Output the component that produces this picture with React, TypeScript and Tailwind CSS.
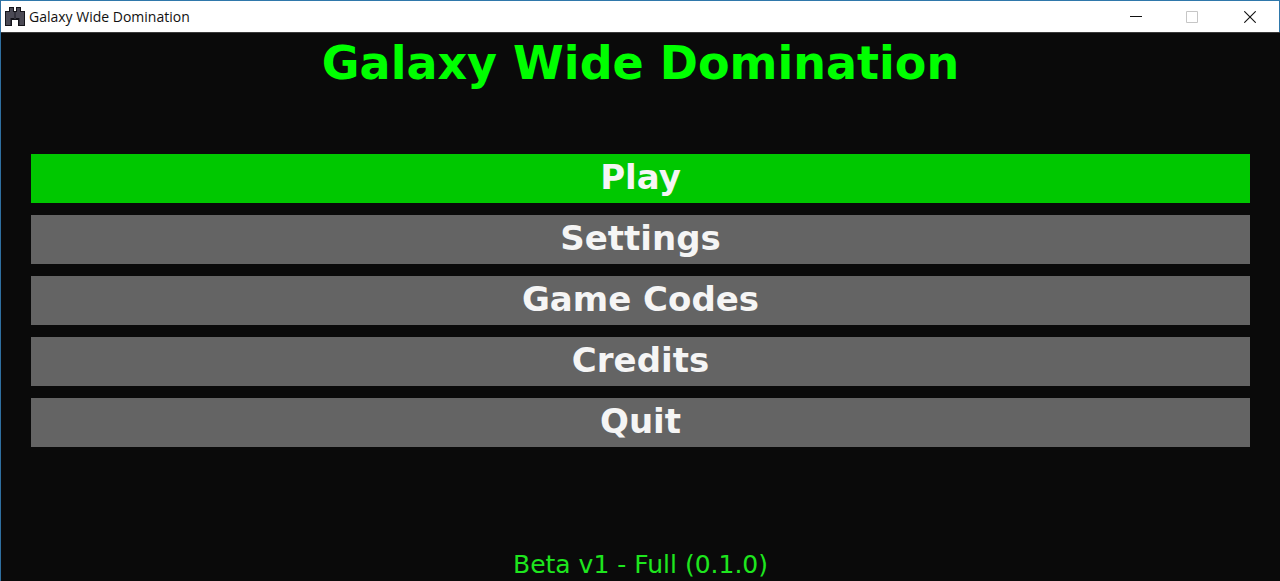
const menuItems = ['Play', 'Settings', 'Game Codes', 'Credits', 'Quit'];

function AppIcon() {
  return (
    <svg width="20" height="20" viewBox="0 0 20 20" aria-hidden="true" shapeRendering="crispEdges">
      <path d="M4 0h5v4h2V0h5v4h4v15h-7v-6H7v6H0V4h4z" fill="#15151b" />
      <path d="M5 1h3v4h4V1h3v4h4v13h-4v-7H5v7H1V5h4z" fill="#4b4a55" />
      <path d="M5 11h1v7H5zM14 11h1v7h-1zM9 5h2v7H9z" fill="#33323c" />
    </svg>
  );
}

function TitleBar() {
  return (
    <header className="flex h-8 items-center justify-between border-t border-r border-[#2f78ab] bg-white pl-1">
      <div className="flex items-center gap-1">
        <AppIcon />
        <span className="font-['Open_Sans',sans-serif] text-[14px] leading-5 text-[#111111]">
          Galaxy Wide Domination
        </span>
      </div>
      <div className="flex h-full">
        <button type="button" aria-label="Minimize" className="flex w-14 items-center justify-center">
          <svg width="12" height="12" viewBox="0 0 12 12" aria-hidden="true">
            <path d="M0 5.5h12" stroke="#111" />
          </svg>
        </button>
        <button type="button" aria-label="Maximize" disabled className="flex w-14 items-center justify-center">
          <svg width="12" height="12" viewBox="0 0 12 12" aria-hidden="true">
            <path d="M.5.5h11v11H.5z" fill="none" stroke="#c6c6c6" />
          </svg>
        </button>
        <button type="button" aria-label="Close" className="flex w-[59px] items-center justify-center">
          <svg width="12" height="12" viewBox="0 0 12 12" aria-hidden="true">
            <path d="M.3.3l11.4 11.4M11.7.3L.3 11.7" stroke="#111" strokeWidth="1.1" />
          </svg>
        </button>
      </div>
    </header>
  );
}

export default function App() {
  return (
    <div className="flex min-h-screen flex-col border-l border-[#2f6fa0] bg-[#0a0a0a] font-['DejaVu_Sans',sans-serif]">
      <TitleBar />
      <main className="flex grow flex-col border-t border-[#3a3a3a] px-[30px] text-center">
        <h1 className="pt-1 text-[46px] leading-[53px] font-bold text-[#00ff00]">Galaxy Wide Domination</h1>
        <nav className="mt-16 flex flex-col gap-3">
          {menuItems.map((item, index) => (
            <button
              key={item}
              type="button"
              className={
                index === 0
                  ? 'h-[49px] bg-[#00c800] pb-1 text-[34px] leading-[44px] font-bold text-[#f5f5f5]'
                  : 'h-[49px] bg-[#646464] pb-1 text-[34px] leading-[44px] font-bold text-[#f5f5f5]'
              }
            >
              {item}
            </button>
          ))}
        </nav>
        <p className="mt-auto text-[25px] leading-8 text-[#1ee61e]">Beta v1 - Full (0.1.0)</p>
      </main>
    </div>
  );
}
